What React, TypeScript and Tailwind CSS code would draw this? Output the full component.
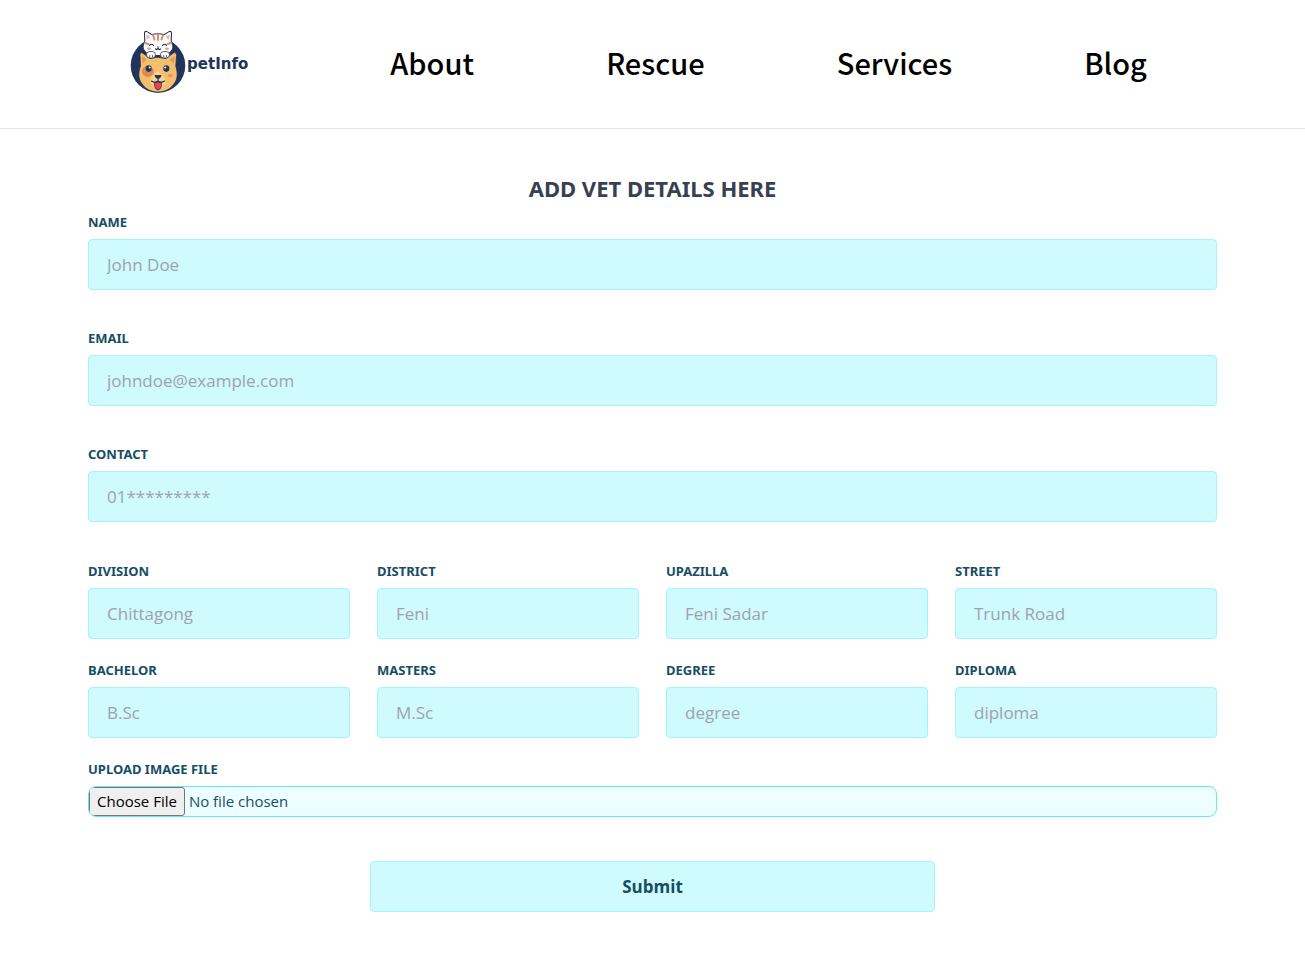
import React from "react";

type FieldProps = {
  id: string;
  label: string;
  placeholder: string;
  type?: string;
};

const labelClass =
  "mb-[9px] block font-['Noto_Sans',sans-serif] text-[13px] leading-4 font-bold uppercase text-[#164e63]";

const contactFields: FieldProps[] = [
  { id: "name", label: "Name", placeholder: "John Doe" },
  { id: "email", label: "Email", placeholder: "johndoe@example.com", type: "email" },
  { id: "contact", label: "Contact", placeholder: "01*********", type: "tel" },
];

const detailFields: FieldProps[] = [
  { id: "division", label: "Division", placeholder: "Chittagong" },
  { id: "district", label: "District", placeholder: "Feni" },
  { id: "upazilla", label: "Upazilla", placeholder: "Feni Sadar" },
  { id: "street", label: "Street", placeholder: "Trunk Road" },
  { id: "bachelor", label: "Bachelor", placeholder: "B.Sc" },
  { id: "masters", label: "Masters", placeholder: "M.Sc" },
  { id: "degree", label: "Degree", placeholder: "degree" },
  { id: "diploma", label: "Diploma", placeholder: "diploma" },
];

const links = ["About", "Rescue", "Services", "Blog"];

function Field({ id, label, placeholder, type = "text" }: FieldProps) {
  return (
    <div className="min-w-0">
      <label htmlFor={id} className={labelClass}>
        {label}
      </label>
      <input
        id={id}
        name={id}
        type={type}
        placeholder={placeholder}
        className="block h-[51px] w-full rounded border border-[#a5f3fc] bg-[#cffafe] px-[18px] text-[17px] text-[#164e63] placeholder:text-[#9ca3af]"
      />
    </div>
  );
}

function PetMark() {
  return (
    <svg viewBox="0 0 56 64" className="h-16 w-14 shrink-0" aria-hidden="true">
      <circle cx="28" cy="35.5" r="27.3" fill="#21345b" />
      {/* cat */}
      <path
        d="M14.5 3.2C14.4 1.5 16 .8 17.4 1.9L22 4.6Q28 2.8 34 4.6L38.6 1.9C40 .8 41.6 1.5 41.5 3.2L41.2 11.5C44 16 43.5 20 39.5 23L36 25.5H20L16.5 23C12.5 20 12 16 14.8 11.5Z"
        fill="#fff"
        stroke="#21345b"
        strokeWidth="1.1"
      />
      <path d="M16.5 4.2L20.5 6.8L16.8 10ZM39.5 4.2L35.5 6.8L39.2 10Z" fill="#f4b5a4" />
      <path
        d="M23 5L24.5 9.5M28 4.6V10M33 5L31.5 9.5M15 13L18.5 14M41 13L37.5 14"
        stroke="#d98d68"
        strokeWidth="2"
        strokeLinecap="round"
      />
      <path
        d="M19.5 15.5Q21.5 13 23.5 15.5M32.5 15.5Q34.5 13 36.5 15.500M25.500 19Q27 20.500 28 18Q29 20.500 30.500 19"
        fill="none"
        stroke="#21345b"
        strokeWidth="1.2"
        strokeLinecap="round"
      />
      <path d="M26.8 16.3H29.2L28 17.8Z" fill="#e9636b" />
      <ellipse cx="19" cy="18.7" rx="2" ry="1.2" fill="#f59a9b" />
      <ellipse cx="37" cy="18.7" rx="2" ry="1.2" fill="#f59a9b" />
      {/* dog */}
      <path
        d="M10 25.5C9.700 23 11.300 22 13 23.400L20 28.500Q28 26 35.500 28.500L43.500 23C45.300 22 46.700 23 46.500 25.500L45.800 36C47.500 42 48.500 49 43.500 54.500C39.500 60 34 62 28 62C22 62 16.500 60 12.500 54.500C7.500 49 8.500 42 10.500 36Z"
        fill="#f5be6d"
        stroke="#21345b"
        strokeWidth=".8"
      />
      <path d="M12 26.5L16.500 29.500L12.800 33.500ZM44.500 26.500L39.700 29.500L43.500 33.500Z" fill="#e6935d" />
      <path d="M14 37Q19 34 23 38.500Q25.500 42.500 21 46Q16 48.500 13 44.500Q10.500 40 14 37Z" fill="#d98a58" />
      <path
        d="M28 41C25.500 44 20.500 46 20.500 51C20.500 55 24 57 28 57C32 57 35.500 55 35.500 51C35.500 46 30.500 44 28 41Z"
        fill="#fbd48f"
      />
      <ellipse cx="18.700" cy="38.600" rx="3" ry="3.300" fill="#21345b" />
      <ellipse cx="36.300" cy="38.600" rx="3" ry="3.300" fill="#21345b" />
      <circle cx="19.700" cy="37.400" r="1" fill="#fff" />
      <circle cx="35.300" cy="37.400" r="1" fill="#fff" />
      <ellipse cx="40.500" cy="45.500" rx="2.800" ry="1.800" fill="#ee9663" />
      <path d="M24.500 45H31.500Q31 48.500 28 49Q25 48.500 24.500 45Z" fill="#21345b" />
      <path d="M24.500 52H31.500V55.500Q30.500 60 28 60Q25.500 60 24.500 55.500Z" fill="#ef4051" stroke="#21345b" strokeWidth=".8" />
      <path
        d="M28 48.500V51Q25 53.500 21.500 51M28 51Q31 53.500 34.500 51"
        fill="none"
        stroke="#21345b"
        strokeWidth="1.2"
        strokeLinecap="round"
      />
      {/* paws */}
      <rect x="16.500" y="21.500" width="9" height="6.500" rx="3.200" fill="#fff" stroke="#21345b" strokeWidth=".8" />
      <rect x="30.500" y="21.500" width="9" height="6.500" rx="3.200" fill="#fff" stroke="#21345b" strokeWidth=".8" />
      <path
        d="M19.700 25V27.500M22.500 25V27.500M33.700 25V27.500M36.500 25V27.500"
        stroke="#21345b"
        strokeWidth=".7"
      />
    </svg>
  );
}

export default function App() {
  return (
    <div className="min-h-screen bg-white font-['Open_Sans','Noto_Sans',sans-serif]">
      <header className="border-b border-[#e5e7eb]">
        <nav className="flex h-32 items-center justify-around pr-[92px] pb-1 pl-16 font-['Noto_Sans_CJK_JP',sans-serif]">
          <a href="#" className="flex w-32 items-center gap-px" aria-label="petInfo">
            <PetMark />
            <span className="pt-1 font-['DejaVu_Sans',sans-serif] text-[15px] leading-4 font-bold text-[#21345b]">
              petInfo
            </span>
          </a>
          {links.map((link) => (
            <a key={link} href="#" className="text-[29px] leading-10 font-medium text-black">
              {link}
            </a>
          ))}
        </nav>
      </header>

      <main className="px-[88px] pt-[43px] pb-11">
        <h1 className="mb-[10px] text-center font-['Noto_Sans',sans-serif] text-[22px] leading-8 font-bold text-[#374151] uppercase">
          Add vet details here
        </h1>
        <form>
          <div className="flex flex-col gap-10">
            {contactFields.map((field) => (
              <Field key={field.id} {...field} />
            ))}
          </div>
          <div className="mt-[41px] grid grid-cols-4 gap-x-[27px] gap-y-[23px]">
            {detailFields.map((field) => (
              <Field key={field.id} {...field} />
            ))}
          </div>
          <div className="mt-[23px]">
            <label htmlFor="image" className={labelClass}>
              Upload image file
            </label>
            <input
              id="image"
              name="image"
              type="file"
              accept="image/*"
              className="block h-[31px] w-full rounded-lg border border-[#67e8f9] bg-[#ecfeff] text-[15px] text-[#164e63] file:mr-1 file:h-[29px] file:rounded-[3px] file:border file:border-solid file:border-[#767676] file:bg-[#efefef] file:px-[7px] file:text-black"
            />
          </div>
          <button
            type="submit"
            className="mx-auto mt-11 block h-[51px] w-1/2 rounded border border-[#a5f3fc] bg-[#cffafe] text-[17px] font-bold text-[#164e63]"
          >
            Submit
          </button>
        </form>
      </main>
    </div>
  );
}
